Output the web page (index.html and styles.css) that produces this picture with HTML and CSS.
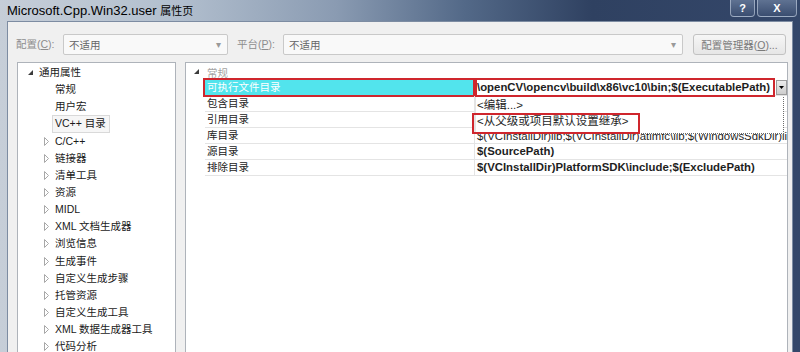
FILE: index.html
```html
<!DOCTYPE html>
<html lang="zh-CN">
<head>
    <meta charset="UTF-8">
    <title>Microsoft.Cpp.Win32.user 属性页</title>
    <link rel="stylesheet" href="styles.css">
</head>
<body>
    <div class="window">
        <div class="titlebar">
            <span class="title">Microsoft.Cpp.Win32.user <span class="title-cjk">属性页</span></span>
            <div class="caption-btns">
                <span class="cap-btn help">?</span>
                <span class="cap-btn close">X</span>
            </div>
        </div>

        <div class="client">
            <div class="toolbar">
                <span class="lbl lbl-config">配置(<u>C</u>):</span>
                <div class="combo combo-config"><span>不适用</span><span class="arrow">▾</span></div>
                <span class="lbl lbl-platform">平台(<u>P</u>):</span>
                <div class="combo combo-platform"><span>不适用</span><span class="arrow">▾</span></div>
                <button class="btn-manager">配置管理器(<u>O</u>)...</button>
            </div>

            <div class="main">
                <div class="tree">
                    <div class="tree-row root">
                        <span class="twisty"><svg width="6" height="6" viewBox="0 0 6 6"><polygon points="5,0 5,5 0,5" fill="#3c3c3c"/></svg></span>
                        <span class="node">通用属性</span>
                    </div>
                    <div class="tree-row child"><span class="twisty"></span><span class="node">常规</span></div>
                    <div class="tree-row child"><span class="twisty"></span><span class="node">用户宏</span></div>
                    <div class="tree-row child"><span class="twisty"></span><span class="node selected">VC++ 目录</span></div>
                    <div class="tree-row child"><span class="twisty"><svg width="6" height="9" viewBox="0 0 6 9"><polygon points="0.5,0.5 4.5,4.5 0.5,8.5" fill="none" stroke="#a8a8a8"/></svg></span><span class="node">C/C++</span></div>
                    <div class="tree-row child"><span class="twisty"><svg width="6" height="9" viewBox="0 0 6 9"><polygon points="0.5,0.5 4.5,4.5 0.5,8.5" fill="none" stroke="#a8a8a8"/></svg></span><span class="node">链接器</span></div>
                    <div class="tree-row child"><span class="twisty"><svg width="6" height="9" viewBox="0 0 6 9"><polygon points="0.5,0.5 4.5,4.5 0.5,8.5" fill="none" stroke="#a8a8a8"/></svg></span><span class="node">清单工具</span></div>
                    <div class="tree-row child"><span class="twisty"><svg width="6" height="9" viewBox="0 0 6 9"><polygon points="0.5,0.5 4.5,4.5 0.5,8.5" fill="none" stroke="#a8a8a8"/></svg></span><span class="node">资源</span></div>
                    <div class="tree-row child"><span class="twisty"><svg width="6" height="9" viewBox="0 0 6 9"><polygon points="0.5,0.5 4.5,4.5 0.5,8.5" fill="none" stroke="#a8a8a8"/></svg></span><span class="node">MIDL</span></div>
                    <div class="tree-row child"><span class="twisty"><svg width="6" height="9" viewBox="0 0 6 9"><polygon points="0.5,0.5 4.5,4.5 0.5,8.5" fill="none" stroke="#a8a8a8"/></svg></span><span class="node">XML 文档生成器</span></div>
                    <div class="tree-row child"><span class="twisty"><svg width="6" height="9" viewBox="0 0 6 9"><polygon points="0.5,0.5 4.5,4.5 0.5,8.5" fill="none" stroke="#a8a8a8"/></svg></span><span class="node">浏览信息</span></div>
                    <div class="tree-row child"><span class="twisty"><svg width="6" height="9" viewBox="0 0 6 9"><polygon points="0.5,0.5 4.5,4.5 0.5,8.5" fill="none" stroke="#a8a8a8"/></svg></span><span class="node">生成事件</span></div>
                    <div class="tree-row child"><span class="twisty"><svg width="6" height="9" viewBox="0 0 6 9"><polygon points="0.5,0.5 4.5,4.5 0.5,8.5" fill="none" stroke="#a8a8a8"/></svg></span><span class="node">自定义生成步骤</span></div>
                    <div class="tree-row child"><span class="twisty"><svg width="6" height="9" viewBox="0 0 6 9"><polygon points="0.5,0.5 4.5,4.5 0.5,8.5" fill="none" stroke="#a8a8a8"/></svg></span><span class="node">托管资源</span></div>
                    <div class="tree-row child"><span class="twisty"><svg width="6" height="9" viewBox="0 0 6 9"><polygon points="0.5,0.5 4.5,4.5 0.5,8.5" fill="none" stroke="#a8a8a8"/></svg></span><span class="node">自定义生成工具</span></div>
                    <div class="tree-row child"><span class="twisty"><svg width="6" height="9" viewBox="0 0 6 9"><polygon points="0.5,0.5 4.5,4.5 0.5,8.5" fill="none" stroke="#a8a8a8"/></svg></span><span class="node">XML 数据生成器工具</span></div>
                    <div class="tree-row child"><span class="twisty"><svg width="6" height="9" viewBox="0 0 6 9"><polygon points="0.5,0.5 4.5,4.5 0.5,8.5" fill="none" stroke="#a8a8a8"/></svg></span><span class="node">代码分析</span></div>
                </div>

                <div class="grid">
                    <div class="category">
                        <span class="twisty"><svg width="6" height="6" viewBox="0 0 6 6"><polygon points="5,0 5,5 0,5" fill="#3c3c3c"/></svg></span>
                        <span class="cat-name">常规</span>
                    </div>
                    <div class="prop-row active">
                        <div class="prop-name hl">可执行文件目录</div>
                        <div class="prop-value">
                            <span class="value-text bold hl">\openCV\opencv\build\x86\vc10\bin;$(ExecutablePath)</span>
                            <span class="drop-btn"><svg width="5" height="3" viewBox="0 0 5 3"><polygon points="0,0 5,0 2.5,3" fill="#000"/></svg></span>
                        </div>
                    </div>
                    <div class="prop-row">
                        <div class="prop-name">包含目录</div>
                        <div class="prop-value"></div>
                    </div>
                    <div class="prop-row">
                        <div class="prop-name">引用目录</div>
                        <div class="prop-value"></div>
                    </div>
                    <div class="prop-row">
                        <div class="prop-name">库目录</div>
                        <div class="prop-value"><span class="value-text under-drop">$(VCInstallDir)lib;$(VCInstallDir)atlmfc\lib;$(WindowsSdkDir)lib</span></div>
                    </div>
                    <div class="prop-row">
                        <div class="prop-name">源目录</div>
                        <div class="prop-value"><span class="value-text bold">$(SourcePath)</span></div>
                    </div>
                    <div class="prop-row">
                        <div class="prop-name">排除目录</div>
                        <div class="prop-value"><span class="value-text bold">$(VCInstallDir)PlatformSDK\include;$(ExcludePath)</span></div>
                    </div>

                    <!-- open dropdown of the selected value -->
                    <div class="dropdown">
                        <div class="dd-item">&lt;编辑...&gt;</div>
                        <div class="dd-item"><span class="dd-mark">&lt;从父级或项目默认设置继承&gt;</span></div>
                    </div>
                </div>
            </div>
        </div>
    </div>
</body>
</html>
```

FILE: styles.css
```css
* {
    box-sizing: border-box;
}

body {
    margin: 0;
    font-family: "Liberation Sans", "Noto Sans CJK SC", sans-serif;
    font-size: 10.5px;
    color: #1e1e1e;
    overflow: hidden;
}

.window {
    width: 800px;
    height: 352px;
    display: flex;
    flex-direction: column;
    overflow: hidden;
    background: linear-gradient(90deg, #c6ced8 0%, #b2bfce 22%, #8a9bb2 42%, #536988 58%, #2f4161 74%, #34476a 100%);
}

/* title bar */
.titlebar {
    height: 21px;
    display: flex;
    align-items: flex-start;
    flex-shrink: 0;
}

.title {
    padding-left: 7px;
    line-height: 22px;
    font-size: 13px;
    color: #000;
}

.title-cjk {
    font-size: 11px;
}

.caption-btns {
    margin-left: auto;
    margin-right: 3px;
    display: flex;
    gap: 2px;
}

.cap-btn {
    height: 17px;
    display: flex;
    align-items: center;
    justify-content: center;
    border: 1px solid rgba(200, 212, 228, 0.6);
    border-top: none;
    border-radius: 0 0 4px 4px;
    background: linear-gradient(#5f7292, #3a4d70);
    color: #fff;
    font-weight: bold;
    font-size: 11px;
}

.help {
    width: 25px;
}

.close {
    width: 40px;
}

/* dialog body */
.client {
    flex: 1;
    margin: 0 7px;
    min-height: 0;
    display: flex;
    flex-direction: column;
    background: #f0f0f0;
    border: 1px solid #7d8ca2;
    border-bottom: none;
}

.toolbar {
    height: 40px;
    flex-shrink: 0;
    display: flex;
    align-items: flex-start;
    padding: 12px 6px 0 8px;
}

.lbl {
    line-height: 21px;
    color: #8d8d8d;
}

.lbl-config {
    width: 47px;
}

.lbl-platform {
    width: 46px;
    margin-left: 9px;
}

.combo {
    height: 21px;
    display: flex;
    align-items: center;
    padding: 0 6px 0 5px;
    border: 1px solid #c9c9c9;
    border-radius: 2px;
    background: #f9f9f9;
    color: #666;
}

.combo .arrow {
    margin-left: auto;
    color: #9a9a9a;
    font-size: 10px;
}

.combo-config {
    width: 165px;
}

.combo-platform {
    width: 400px;
}

.btn-manager {
    margin-left: auto;
    width: 93px;
    height: 21px;
    padding: 0;
    font: inherit;
    color: #7a7a7a;
    border: 1px solid #c2c2c2;
    border-radius: 3px;
    background: linear-gradient(#f6f6f6, #e6e6e6);
}

.main {
    flex: 1;
    min-height: 0;
    display: flex;
    gap: 9px;
    padding: 0 4px 0 9px;
}

/* left tree */
.tree {
    width: 159px;
    flex-shrink: 0;
    padding-top: 1px;
    background: #fff;
    border: 1px solid #aeb3ba;
    border-bottom: none;
    font-size: 10.5px;
}

.tree-row {
    height: 17.15px;
    display: flex;
    align-items: center;
    white-space: nowrap;
    color: #1a1a1a;
}

.tree-row.root {
    padding-left: 10px;
}

.tree-row.child {
    padding-left: 26px;
}

.twisty {
    width: 11px;
    flex-shrink: 0;
    display: flex;
    align-items: center;
}

.node {
    line-height: 15px;
}

.node.selected {
    margin-left: -3px;
    padding: 0 3px 1px 2px;
    border: 1px solid #d9d9d9;
    background: #f6f6f6;
}

/* property grid */
.grid {
    flex: 1;
    position: relative;
    overflow: hidden;
    padding-top: 1px;
    background: #fff;
    border: 1px solid #aeb3ba;
    border-bottom: none;
}

.category {
    height: 16px;
    display: flex;
    align-items: center;
    padding-left: 8px;
}

.category .twisty {
    width: 13px;
}

.cat-name {
    color: #a3a3a3;
}

.prop-row {
    height: 16px;
    display: flex;
    margin-left: 19px;
    border-bottom: 1px solid #e4e4e4;
    white-space: nowrap;
}

.prop-name {
    width: 270px;
    flex-shrink: 0;
    padding-left: 2px;
    line-height: 15px;
    border-right: 1px solid #e4e4e4;
    color: #222;
}

.prop-value {
    flex: 1;
    min-width: 0;
    display: flex;
}

.value-text {
    flex: 1;
    min-width: 0;
    padding-left: 2px;
    line-height: 15px;
    font-size: 11.4px;
    overflow: hidden;
}

.value-text.under-drop {
    line-height: 16px;
}

.bold {
    font-weight: bold;
}

.prop-row.active .prop-name {
    background: #52e4ed;
    color: #fff;
}

.prop-row.active .value-text {
    margin-right: 3px;
}

.hl {
    outline: 2px solid #cf262d;
}

.drop-btn {
    width: 11px;
    flex-shrink: 0;
    display: flex;
    align-items: center;
    justify-content: center;
    border: 1px solid #9c9c9c;
    background: linear-gradient(#ececec, #cdcdcd);
}

.dropdown {
    position: absolute;
    left: 289px;
    top: 34px;
    width: 309px;
    height: 37px;
    background: #fff;
    border-right: 1px dotted #6c6c6c;
    border-bottom: 1px dotted #6c6c6c;
    border-left: 1px solid #e4e4e4;
}

.dd-item {
    height: 16px;
    line-height: 16px;
    padding-left: 1px;
    font-size: 11.5px;
    white-space: nowrap;
}

.dd-mark {
    display: inline-block;
    margin-left: -5px;
    padding: 0 0 4px 3px;
    width: 168px;
    line-height: 13px;
    border: 2px solid #cf262d;
}
```
